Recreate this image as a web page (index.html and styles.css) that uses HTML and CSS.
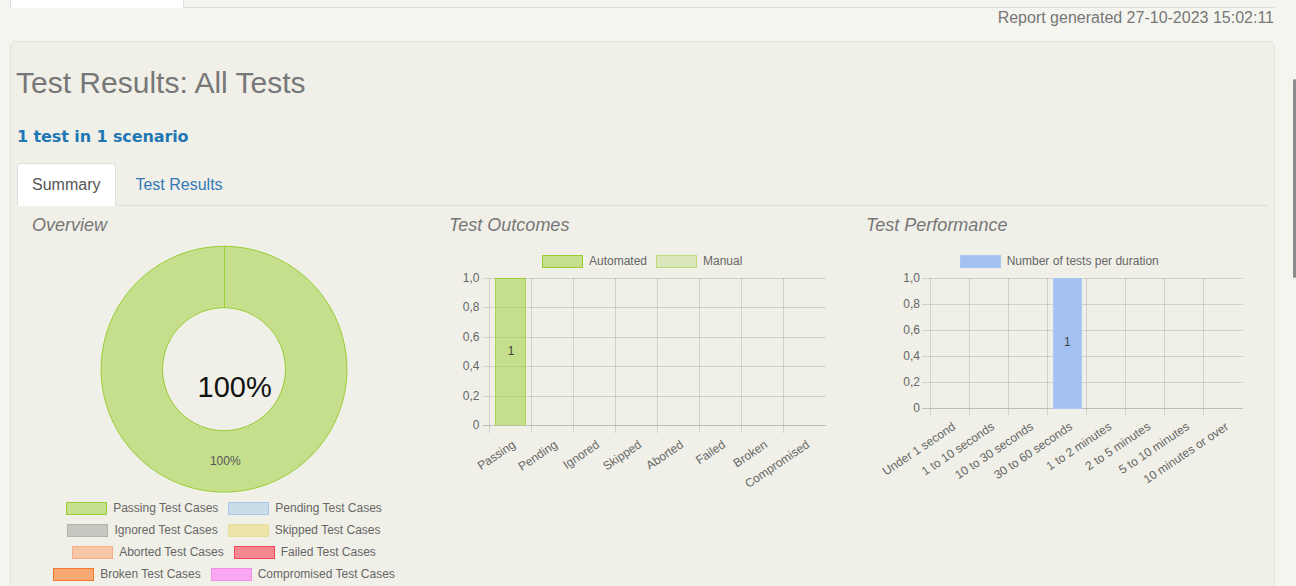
FILE: index.html
```html
<!DOCTYPE html>
<html>
<head>
<meta charset="utf-8">
<title>Test Results: All Tests</title>
<link rel="stylesheet" href="styles.css">
</head>
<body>
<div class="topnav"><div class="toptab"></div><div class="toprest"></div></div>
<div class="generated">Report generated 27-10-2023 15:02:11</div>
<div class="panel">
  <h1 class="title">Test Results: All Tests</h1>
  <h2 class="subtitle">1 test in 1 scenario</h2>
  <ul class="tabs">
    <li class="tab active"><a>Summary</a></li>
    <li class="tab"><a>Test Results</a></li>
  </ul>
  <div class="charts">
    <section class="chart-col">
      <h3>Overview</h3>
      <svg class="donut" width="384" height="248" viewBox="0 0 384 248">
        <path d="M192 1.3 A122.9 122.9 0 1 1 191.99 1.3 Z M192 62.7 A61.5 61.5 0 1 0 192.01 62.7 Z" fill="rgba(154,205,50,0.5)" fill-rule="evenodd" stroke="#9acd32" stroke-width="1"/>
        <line x1="192.5" y1="1.5" x2="192.5" y2="62.7" stroke="#9acd32" stroke-width="1"/>
        <text x="202.6" y="151.7" text-anchor="middle" class="donut-big">100%</text>
        <text x="193.3" y="220" text-anchor="middle" class="donut-small">100%</text>
      </svg>
      <div class="legend">
        <div class="legend-row">
          <span class="legend-item"><i class="swatch sw-passing"></i>Passing Test Cases</span>
          <span class="legend-item"><i class="swatch sw-pending"></i>Pending Test Cases</span>
        </div>
        <div class="legend-row">
          <span class="legend-item"><i class="swatch sw-ignored"></i>Ignored Test Cases</span>
          <span class="legend-item"><i class="swatch sw-skipped"></i>Skipped Test Cases</span>
        </div>
        <div class="legend-row">
          <span class="legend-item"><i class="swatch sw-aborted"></i>Aborted Test Cases</span>
          <span class="legend-item"><i class="swatch sw-failed"></i>Failed Test Cases</span>
        </div>
        <div class="legend-row">
          <span class="legend-item"><i class="swatch sw-broken"></i>Broken Test Cases</span>
          <span class="legend-item"><i class="swatch sw-compromised"></i>Compromised Test Cases</span>
        </div>
      </div>
    </section>

    <section class="chart-col">
      <h3>Test Outcomes</h3>
      <svg class="bar-chart" width="387" height="250" viewBox="0 0 387 250">
        <rect x="93.5" y="10.5" width="40" height="12" fill="rgba(154,205,50,0.5)" stroke="#9acd32"/>
        <text x="140" y="20.3" class="lbl">Automated</text>
        <rect x="207.5" y="10.5" width="40" height="12" fill="rgba(154,205,50,0.25)" stroke="rgba(154,205,50,0.55)"/>
        <text x="254" y="20.3" class="lbl">Manual</text>
        <g class="grid">
          <line x1="34" y1="33.5" x2="377" y2="33.5"/>
          <line x1="34" y1="62.5" x2="377" y2="62.5"/>
          <line x1="34" y1="92.5" x2="377" y2="92.5"/>
          <line x1="34" y1="121.5" x2="377" y2="121.5"/>
          <line x1="34" y1="151.5" x2="377" y2="151.5"/>
          <line x1="40.5" y1="33" x2="40.5" y2="188"/>
          <line x1="82.5" y1="33" x2="82.5" y2="188"/>
          <line x1="124.5" y1="33" x2="124.5" y2="188"/>
          <line x1="166.5" y1="33" x2="166.5" y2="188"/>
          <line x1="208.5" y1="33" x2="208.5" y2="188"/>
          <line x1="250.5" y1="33" x2="250.5" y2="188"/>
          <line x1="292.5" y1="33" x2="292.5" y2="188"/>
          <line x1="334.5" y1="33" x2="334.5" y2="188"/>
        </g>
        <line class="zero" x1="34" y1="180.5" x2="377" y2="180.5"/>
        <g class="lbl" text-anchor="end">
          <text x="30.5" y="37">1,0</text>
          <text x="30.5" y="66">0,8</text>
          <text x="30.5" y="96">0,6</text>
          <text x="30.5" y="125">0,4</text>
          <text x="30.5" y="155">0,2</text>
          <text x="30.5" y="184">0</text>
        </g>
        <rect x="46.5" y="33.5" width="30" height="147" fill="rgba(154,205,50,0.5)"/>
        <path d="M46.5 180.5 V33.5 H76.5 V180.5" fill="none" stroke="#a9d455"/>
        <line x1="46" y1="33.5" x2="77" y2="33.5" stroke="#9acd32"/>
        <text x="62" y="110" text-anchor="middle" class="val">1</text>
        <g class="lbl xl" text-anchor="end">
          <text transform="translate(65 198) rotate(-34)" dy="0.35em">Passing</text>
          <text transform="translate(107 198) rotate(-34)" dy="0.35em">Pending</text>
          <text transform="translate(149 198) rotate(-34)" dy="0.35em">Ignored</text>
          <text transform="translate(191 198) rotate(-34)" dy="0.35em">Skipped</text>
          <text transform="translate(233 198) rotate(-34)" dy="0.35em">Aborted</text>
          <text transform="translate(275 198) rotate(-34)" dy="0.35em">Failed</text>
          <text transform="translate(317 198) rotate(-34)" dy="0.35em">Broken</text>
          <text transform="translate(359 198) rotate(-34)" dy="0.35em">Compromised</text>
        </g>
      </svg>
    </section>

    <section class="chart-col">
      <h3>Test Performance</h3>
      <svg class="bar-chart" width="387" height="250" viewBox="0 0 387 250">
        <rect x="94.5" y="10.5" width="40" height="12" fill="#a3c1f2" stroke="#aac6f3"/>
        <text x="140.7" y="20.3" class="lbl">Number of tests per duration</text>
        <g class="grid">
          <line x1="56" y1="33.5" x2="377" y2="33.5"/>
          <line x1="56" y1="59.5" x2="377" y2="59.5"/>
          <line x1="56" y1="85.5" x2="377" y2="85.5"/>
          <line x1="56" y1="111.5" x2="377" y2="111.5"/>
          <line x1="56" y1="137.5" x2="377" y2="137.5"/>
          <line x1="64.5" y1="33" x2="64.5" y2="170"/>
          <line x1="103.5" y1="33" x2="103.5" y2="170"/>
          <line x1="142.5" y1="33" x2="142.5" y2="170"/>
          <line x1="181.5" y1="33" x2="181.5" y2="170"/>
          <line x1="220.5" y1="33" x2="220.5" y2="170"/>
          <line x1="259.5" y1="33" x2="259.5" y2="170"/>
          <line x1="298.5" y1="33" x2="298.5" y2="170"/>
          <line x1="337.5" y1="33" x2="337.5" y2="170"/>
        </g>
        <line class="zero" x1="56" y1="163.5" x2="377" y2="163.5"/>
        <g class="lbl" text-anchor="end">
          <text x="54" y="37">1,0</text>
          <text x="54" y="63">0,8</text>
          <text x="54" y="89">0,6</text>
          <text x="54" y="115">0,4</text>
          <text x="54" y="141">0,2</text>
          <text x="54" y="167">0</text>
        </g>
        <rect x="187.5" y="33.5" width="28" height="130" fill="#a3c1f2" stroke="#adc9f4"/>
        <text x="201.3" y="101" text-anchor="middle" class="val">1</text>
        <g class="lbl xl" text-anchor="end">
          <text transform="translate(88 180) rotate(-34)" dy="0.35em">Under 1 second</text>
          <text transform="translate(127 180) rotate(-34)" dy="0.35em">1 to 10 seconds</text>
          <text transform="translate(166 180) rotate(-34)" dy="0.35em">10 to 30 seconds</text>
          <text transform="translate(205 180) rotate(-34)" dy="0.35em">30 to 60 seconds</text>
          <text transform="translate(244 180) rotate(-34)" dy="0.35em">1 to 2 minutes</text>
          <text transform="translate(283 180) rotate(-34)" dy="0.35em">2 to 5 minutes</text>
          <text transform="translate(322 180) rotate(-34)" dy="0.35em">5 to 10 minutes</text>
          <text transform="translate(361 180) rotate(-34)" dy="0.35em">10 minutes or over</text>
        </g>
      </svg>
    </section>
  </div>
</div>
<div class="scroll-thumb"></div>
</body>
</html>
```

FILE: styles.css
```css
html, body {
  margin: 0;
  padding: 0;
}
html {
  overflow: hidden;
}
body {
  background: #f5f5f0;
  font-family: "Liberation Sans", Arial, sans-serif;
  color: #555;
  height: 586px;
}

.topnav {
  display: flex;
  height: 8px;
  margin: 0 21px 0 10px;
}
.toptab {
  width: 172px;
  background: #fff;
  border-left: 1px solid #ddd;
  border-right: 1px solid #ddd;
}
.toprest {
  flex: 1;
  box-sizing: border-box;
  height: 8px;
  border-bottom: 1px solid #ddd;
}

.generated {
  margin-top: 1px;
  line-height: 18px;
  font-size: 16px;
  text-align: right;
  padding-right: 22px;
  color: #777;
}

.panel {
  margin: 14px 21px 0 10px;
  border: 1px solid #e3e3db;
  border-radius: 6px;
  background: #f0f0e8;
  padding: 0 6px;
  height: 600px;
}

.title {
  margin: 24px 0 0 -1px;
  font-size: 30px;
  line-height: 33px;
  font-weight: normal;
  color: #777;
}

.subtitle {
  margin: 28px 0 0;
  font: bold 16px/19px "DejaVu Sans", Verdana, sans-serif;
  letter-spacing: -0.1px;
  color: #1f77b4;
}

.tabs {
  list-style: none;
  margin: 17px 0 0;
  padding: 0;
  display: flex;
  border-bottom: 1px solid #ddd;
}
.tab {
  margin-bottom: -1px;
  margin-right: 4px;
}
.tab a {
  display: block;
  padding: 10px 15px 10px 14px;
  line-height: 21px;
  font-size: 16px;
  border: 1px solid transparent;
  border-radius: 4px 4px 0 0;
  color: #337ab7;
}
.tab.active a {
  background: #fff;
  border-color: #ddd #ddd transparent;
  color: #555;
}

.charts {
  display: grid;
  grid-template-columns: repeat(3, 1fr);
}
.chart-col {
  padding: 0 15px;
}
.chart-col h3 {
  margin: 9px 0 0;
  font-size: 18px;
  line-height: 20px;
  font-style: italic;
  font-weight: normal;
  color: #777;
}
.chart-col svg {
  display: block;
  margin-top: 10px;
  overflow: visible;
  font-family: "Liberation Sans", Arial, sans-serif;
}

.donut-big {
  font-size: 29px;
  fill: #111;
}
.donut-small {
  font-size: 12px;
  fill: #555;
}

.lbl {
  font-size: 12px;
  fill: #666;
}
.val {
  font-size: 12px;
  fill: #444;
}
.grid line {
  stroke: rgba(0, 0, 0, 0.12);
  stroke-width: 1;
}
.zero {
  stroke: rgba(0, 0, 0, 0.2);
  stroke-width: 1;
}

.legend {
  margin-top: 4px;
  width: 384px;
}
.legend-row {
  display: flex;
  justify-content: center;
  align-items: center;
  height: 22px;
}
.legend-item {
  display: flex;
  align-items: center;
  margin: 0 5px;
  font-size: 12px;
  color: #666;
}
.swatch {
  display: block;
  width: 41px;
  height: 13px;
  box-sizing: border-box;
  border: 1px solid;
  margin-right: 6px;
}
.sw-passing { background: rgba(154, 205, 50, 0.5); border-color: #9acd32; }
.sw-pending { background: #c9dcea; border-color: #aac8e8; }
.sw-ignored { background: #c8c8c2; border-color: #b2b2ac; }
.sw-skipped { background: #ede4a8; border-color: #e9df9c; }
.sw-aborted { background: #f7c6a6; border-color: #f5ae87; }
.sw-failed { background: #f8878f; border-color: #f0485a; }
.sw-broken { background: #f8a873; border-color: #f57a2e; }
.sw-compromised { background: #f7a8f0; border-color: #f28de8; }

.scroll-thumb {
  position: fixed;
  right: 0;
  top: 79px;
  width: 3px;
  height: 199px;
  background: #8c8c8c;
  border-radius: 2px;
}
```
